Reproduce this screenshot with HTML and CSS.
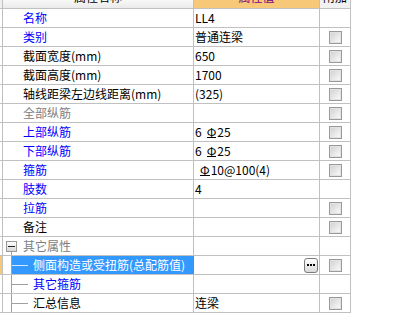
FILE: index.html
```html
<!DOCTYPE html>
<html lang="zh-CN">
	<head>
		<meta charset="UTF-8" />
		<meta name="viewport" content="width=device-width, initial-scale=1.0" />
		<title>属性编辑</title>
		<link rel="stylesheet" href="styles.css">
	</head>
	<body>
		<div class="grid">
			<div class="row head">
				<div class="cell gut"></div>
				<div class="cell name"><span>属性名称</span></div>
				<div class="cell val"><span>属性值</span></div>
				<div class="cell add"><span>附加</span></div>
			</div>

			<div class="row">
				<div class="cell gut"></div>
				<div class="cell name blue">名称</div>
				<div class="cell val">LL4</div>
				<div class="cell add"></div>
			</div>
			<div class="row">
				<div class="cell gut"></div>
				<div class="cell name blue">类别</div>
				<div class="cell val">普通连梁</div>
				<div class="cell add"><span class="chk"></span></div>
			</div>
			<div class="row">
				<div class="cell gut"></div>
				<div class="cell name">截面宽度(mm)</div>
				<div class="cell val">650</div>
				<div class="cell add"><span class="chk"></span></div>
			</div>
			<div class="row">
				<div class="cell gut"></div>
				<div class="cell name">截面高度(mm)</div>
				<div class="cell val">1700</div>
				<div class="cell add"><span class="chk"></span></div>
			</div>
			<div class="row">
				<div class="cell gut"></div>
				<div class="cell name">轴线距梁左边线距离(mm)</div>
				<div class="cell val">(325)</div>
				<div class="cell add"><span class="chk"></span></div>
			</div>
			<div class="row">
				<div class="cell gut"></div>
				<div class="cell name grey">全部纵筋</div>
				<div class="cell val"></div>
				<div class="cell add"><span class="chk"></span></div>
			</div>
			<div class="row">
				<div class="cell gut"></div>
				<div class="cell name blue">上部纵筋</div>
				<div class="cell val">6<span class="bar">Φ</span>25</div>
				<div class="cell add"><span class="chk"></span></div>
			</div>
			<div class="row">
				<div class="cell gut"></div>
				<div class="cell name blue">下部纵筋</div>
				<div class="cell val">6<span class="bar">Φ</span>25</div>
				<div class="cell add"><span class="chk"></span></div>
			</div>
			<div class="row">
				<div class="cell gut"></div>
				<div class="cell name blue">箍筋</div>
				<div class="cell val"><span class="bar">Φ</span>10@100(4)</div>
				<div class="cell add"><span class="chk"></span></div>
			</div>
			<div class="row">
				<div class="cell gut"></div>
				<div class="cell name blue">肢数</div>
				<div class="cell val">4</div>
				<div class="cell add"></div>
			</div>
			<div class="row">
				<div class="cell gut"></div>
				<div class="cell name blue">拉筋</div>
				<div class="cell val"></div>
				<div class="cell add"><span class="chk"></span></div>
			</div>
			<div class="row">
				<div class="cell gut"></div>
				<div class="cell name">备注</div>
				<div class="cell val"></div>
				<div class="cell add"><span class="chk"></span></div>
			</div>

			<!-- group: 其它属性 -->
			<div class="row">
				<div class="cell gut"></div>
				<div class="cell name group">
					<span class="toggle"><span class="box"></span><span class="down"></span></span>
					<span class="label grey">其它属性</span>
				</div>
				<div class="cell val"></div>
				<div class="cell add"></div>
			</div>
			<div class="row">
				<div class="cell gut mark"></div>
				<div class="cell name tree picked">
					<span class="stem"></span>
					<span class="leaf sel"><span class="twig"></span>侧面构造或受扭筋(总配筋值)</span>
				</div>
				<div class="cell val"><span class="more"><span class="dots"></span></span></div>
				<div class="cell add"><span class="chk"></span></div>
			</div>
			<div class="row">
				<div class="cell gut"></div>
				<div class="cell name tree">
					<span class="stem"></span>
					<span class="leaf blue"><span class="twig"></span>其它箍筋</span>
				</div>
				<div class="cell val"></div>
				<div class="cell add"></div>
			</div>
			<div class="row">
				<div class="cell gut"></div>
				<div class="cell name tree">
					<span class="stem"></span>
					<span class="leaf"><span class="twig"></span>汇总信息</span>
				</div>
				<div class="cell val">连梁</div>
				<div class="cell add"><span class="chk"></span></div>
			</div>
		</div>
	</body>
</html>
```

FILE: styles.css
```css
body {
	margin: 0;
	background: #fff;
	color: #000;
	font-family: "Noto Sans CJK SC", "Liberation Sans", sans-serif;
	font-size: 12px;
	line-height: 18px;
}

.grid {
	width: 351px;
}

.row {
	display: flex;
	height: 19px;
	box-sizing: border-box;
	border-bottom: 1px solid #c0c0c0;
}

.cell {
	box-sizing: border-box;
	display: flex;
	align-items: center;
	overflow: hidden;
	white-space: nowrap;
	border-right: 1px solid #c0c0c0;
}
.gut {
	width: 3px;
}
.gut.mark {
	background: #f5c97a;
}
.name {
	width: 191px;
	padding-left: 20px;
}
.val {
	width: 126px;
	padding-left: 1px;
}
.add {
	width: 31px;
	padding-left: 9px;
}

/* header, scrolled so only its lower part shows */
.head {
	height: 9px;
}
.head .cell {
	align-items: flex-start;
	justify-content: center;
	padding: 0;
}
.head .cell > span {
	margin-top: -12px;
}
.head .gut {
	background: #efefef;
}
.head .name {
	background: linear-gradient(#f8f8f8, #eaeaea);
}
.head .val {
	background: #f6c878;
	color: #800080;
}
.head .add {
	background: #f1f1f1;
}

.blue {
	color: #0000ff;
}
.grey {
	color: #808080;
}

.chk {
	width: 13px;
	height: 13px;
	box-sizing: border-box;
	border: 1px solid #9a9a9a;
	box-shadow: inset 0 0 0 1px #e2e2e2;
	background: linear-gradient(135deg, #cfcfcf, #fdfdfd);
}

/* rebar grade mark */
.bar {
	display: inline-block;
	line-height: 11px;
	margin: 0 1px 0 5px;
	border-bottom: 1px solid #000;
}

/* tree part */
.group {
	padding-left: 3px;
	align-items: stretch;
}
.toggle {
	width: 11px;
	display: flex;
	flex-direction: column;
	align-items: center;
	padding-top: 4px;
}
.box {
	width: 11px;
	height: 11px;
	box-sizing: border-box;
	border: 1px solid #9a9a9a;
	background: linear-gradient(#fff, #d6d6d6);
	display: flex;
	align-items: center;
	justify-content: center;
}
.box::before {
	content: "";
	width: 7px;
	height: 1px;
	background: #222;
}
.down {
	flex: 1;
	width: 1px;
	background: #a0a0a0;
}
.label {
	margin-left: 6px;
	align-self: center;
}

.tree {
	padding-left: 8px;
	align-items: stretch;
}
.stem {
	width: 1px;
	background: #a0a0a0;
}
.leaf {
	flex: 1;
	display: flex;
	align-items: center;
}
.twig {
	width: 16px;
	height: 1px;
	margin-right: 5px;
	background: #a0a0a0;
}
.leaf.sel {
	background: #3399ff;
	color: #fff;
}
.leaf.sel .twig {
	background: #d6e8ff;
}
.name.picked {
	border-right-color: #3399ff;
}

.more {
	margin-left: auto;
	margin-right: 1px;
	width: 14px;
	height: 15px;
	box-sizing: border-box;
	border: 1px solid #7c7c7c;
	border-radius: 3px;
	background: linear-gradient(#ffffff, #d9d9d9);
	display: flex;
	align-items: center;
	justify-content: center;
}
.dots {
	width: 2px;
	height: 2px;
	margin-right: 6px;
	background: #000;
	box-shadow: 3px 0 #000, 6px 0 #000;
}
```
